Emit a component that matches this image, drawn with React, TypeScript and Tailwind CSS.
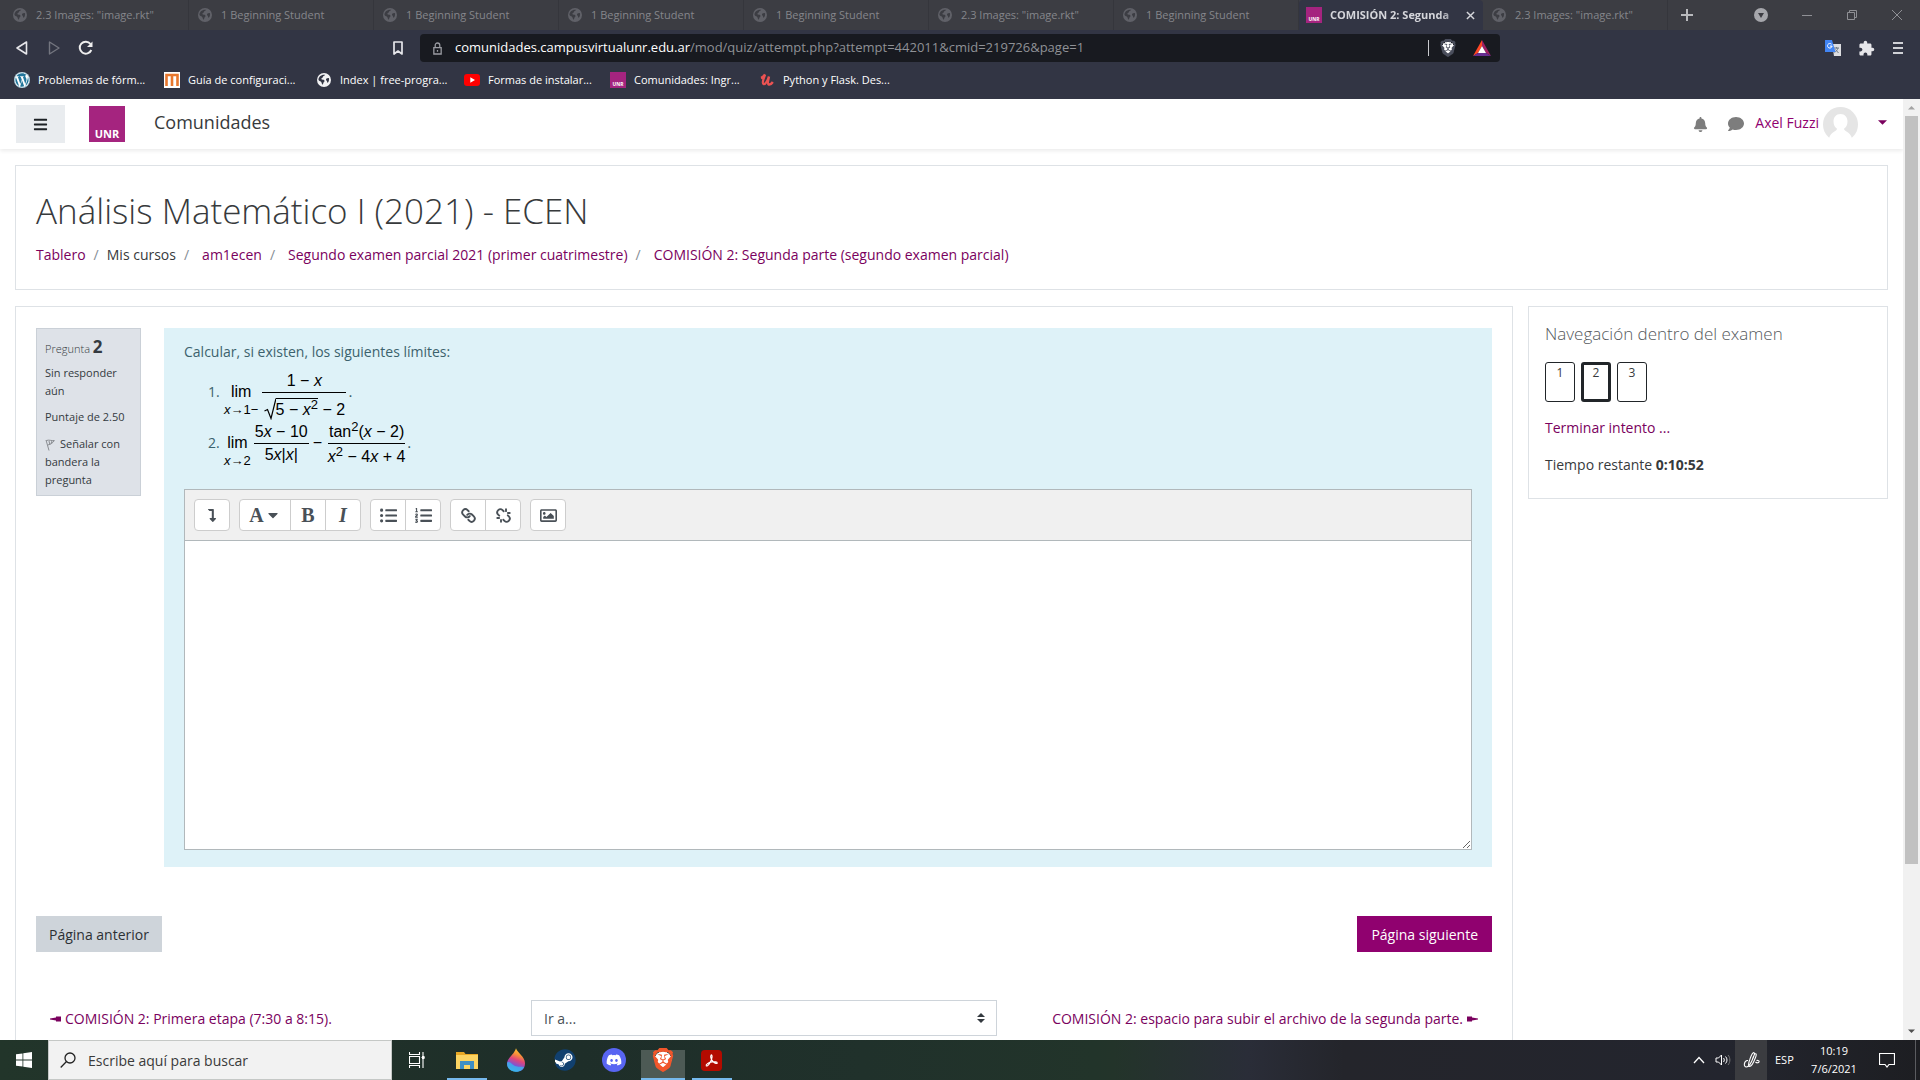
import React from "react";
import {
  FaBars, FaBell, FaCaretDown, FaComment, FaDiscord, FaLevelDownAlt,
  FaListOl, FaListUl, FaRegImage, FaSteam, FaWordpress,
} from "react-icons/fa";
import { MdExtension } from "react-icons/md";
import { SiBrave } from "react-icons/si";
import { Link, Unlink } from "lucide-react";

const Globe = ({ className = "" }: { className?: string }) => (
  <svg viewBox="0 0 16 16" className={`size-4 shrink-0 ${className}`}>
    <path
      fill="currentColor"
      fillRule="evenodd"
      d="M8 1a7 7 0 1 0 0 14A7 7 0 0 0 8 1Zm1.2 1.8c-.5 1-1.400 1-1.900 1.500-.6.500-.3 1.200-.9 1.500-.8.400-1.300.900-.9 1.500.5.600 2 .1 2.700.9.700.800.2 1.400-.3 1.900-.6.600-.5 1.500-1.100 2.600-.9-.3-1-1.700-1.400-2.500C4.900 9.300 3.200 9 2.500 8c-.2-3 2.700-5.800 6.700-5.200Zm1.300 3.700c.900-.6 1.700-.8 2.500-.3.300 1.800-.2 3.400-1.300 4.600-.8-.3-.4-1.300-.9-1.900-.5-.5-1.400-1.500-.3-2.400Z"
    />
  </svg>
);

const UnrMark = ({ className = "size-4" }: { className?: string }) => (
  <svg viewBox="0 0 36 36" className={`shrink-0 ${className}`}>
    <rect width="36" height="36" fill="#a5247f" />
    <text x="18" y="32" textAnchor="middle" fontSize="11" fontWeight="700" fill="#fff" fontFamily="Open Sans, sans-serif">
      UNR
    </text>
  </svg>
);

type Tab = { title: string; active?: boolean };
const images = '2.3 Images: "image.rkt"';
const student = "1 Beginning Student";
const tabs: Tab[] = [
  { title: images }, { title: student }, { title: student }, { title: student }, { title: student },
  { title: images }, { title: student }, { title: "COMISIÓN 2: Segunda", active: true }, { title: images },
];

function TabStrip() {
  return (
    <header className="flex h-[30px] shrink-0 items-stretch bg-[#3c3d43] pl-1 text-[11px]">
      {tabs.map((t, i) =>
        t.active ? (
          <div key={i} className="flex w-[184px] items-center gap-2 rounded-t bg-[#323544] pr-2 pl-[7px] font-bold text-[#d5d6db]">
            <UnrMark />
            <span className="flex-1 whitespace-nowrap [mask-image:linear-gradient(to_right,black_85%,transparent_110%)]">{t.title}</span>
            <button aria-label="Cerrar pestaña">
              <svg viewBox="0 0 10 10" className="size-[9px]"><path d="M1 1l8 8M9 1L1 9" stroke="currentColor" strokeWidth="1.6" /></svg>
            </button>
          </div>
        ) : (
          <button key={i} className="flex w-[185px] items-center gap-2 border-r border-[#35363c] px-2 text-left text-[#85868b]">
            <Globe className="text-[#606168]" />
            <span className="whitespace-nowrap">{t.title}</span>
          </button>
        )
      )}
      <button aria-label="Nueva pestaña" className="ml-3 text-[#b9babd]">
        <svg viewBox="0 0 14 14" className="size-[14px]"><path d="M7 1v12M1 7h12" stroke="currentColor" strokeWidth="2" /></svg>
      </button>
      <div className="ml-auto flex items-center gap-[33px] pr-[17px] text-[#8f9095]">
        <button aria-label="Buscar pestañas">
          <svg viewBox="0 0 14 14" className="size-[14px]"><circle cx="7" cy="7" r="7" fill="#a6a7ac" /><path d="M4 5h6l-3 5z" fill="#3c3d43" /></svg>
        </button>
        <button aria-label="Minimizar"><svg viewBox="0 0 12 12" className="size-3"><path d="M1 6.500h10" stroke="currentColor" /></svg></button>
        <button aria-label="Restaurar"><svg viewBox="0 0 12 12" className="size-3"><path d="M1.500 3.500h7v7h-7zM3.500 3.500v-2h7v7h-2" fill="none" stroke="currentColor" /></svg></button>
        <button aria-label="Cerrar"><svg viewBox="0 0 12 12" className="size-3"><path d="M1 1l10 10M11 1L1 11" stroke="currentColor" /></svg></button>
      </div>
    </header>
  );
}

function Lion({ color, className = "" }: { color: string; className?: string }) {
  return (
    <span className={`grid shrink-0 place-items-center rounded-full bg-[radial-gradient(closest-side,#fff_70%,transparent_72%)] ${className}`}>
      <SiBrave className={`size-full ${color}`} />
    </span>
  );
}

function AddressRow() {
  return (
    <div className="flex h-[36px] shrink-0 items-center bg-[#323544] text-white">
      <div className="flex w-[384px] items-center gap-4 pl-[14px]">
        <button aria-label="Atrás"><svg viewBox="0 0 16 16" className="size-4"><path d="M12.500 2v12L3 8z" fill="none" stroke="#e6e6ea" strokeWidth="1.600" strokeLinejoin="round" /></svg></button>
        <button aria-label="Adelante"><svg viewBox="0 0 16 16" className="size-4"><path d="M3.500 2v12L13 8z" fill="none" stroke="#73757f" strokeWidth="1.400" strokeLinejoin="round" /></svg></button>
        <button aria-label="Recargar"><svg viewBox="0 0 16 16" className="size-4"><path d="M13.300 10A6 6 0 1 1 12.500 4" fill="none" stroke="#eee" strokeWidth="2" /><path d="M14.500 1.500v5.500H9z" fill="#eee" /></svg></button>
      </div>
      <button aria-label="Marcador" className="ml-[6px] mr-[14px]">
        <svg viewBox="0 0 16 16" className="size-4"><path d="M4 2h8v12l-4-3-4 3z" fill="none" stroke="#e6e6ea" strokeWidth="1.700" strokeLinejoin="round" /></svg>
      </button>
      <div className="flex h-7 w-[1080px] items-center rounded bg-[#181a20] pr-[9px] pl-3 text-[13px]">
        <svg viewBox="0 0 12 14" className="mr-3 h-[13px] w-[11px]"><path d="M2 6h8v7H2zM3.500 6V3.500a2.500 2.500 0 0 1 5 0V6M6 8.500v2" fill="none" stroke="#9b9ca2" strokeWidth="1.400" /></svg>
        <span className="whitespace-nowrap text-[#8f9196]">
          <span className="text-white">comunidades.campusvirtualunr.edu.ar</span>/mod/quiz/attempt.php?attempt=442011&amp;cmid=219726&amp;page=1
        </span>
        <span className="ml-auto h-4 w-px bg-[#c9cace]" />
        <Lion color="text-[#4a4e5c]" className="ml-[10px] size-[18px]" />
        <svg viewBox="0 0 18 16" className="ml-4 h-4 w-[18px]">
          <path d="M9 0L0 16l5-3L9 6z" fill="#ff4724" /><path d="M9 0l9 16-5-3L9 6z" fill="#9e1f63" /><path d="M0 16h18l-5-3H5z" fill="#662d91" /><path d="M9 6l4 7H5z" fill="#fff" />
        </svg>
      </div>
      <div className="ml-auto flex items-center gap-[17px] pr-4">
        <svg viewBox="0 0 16 16" className="size-4">
          <path d="M7 4h9v12H9z" fill="#dcdde0" /><path d="M9 8h5M11.500 7v1.500M13 8c-.5 2-2 3.500-3.500 4.500M10.500 9.500l3 3.500" stroke="#6f7a85" fill="none" /><path d="M0 0h7l3.500 12H0z" fill="#4285f4" />
          <path d="M6.500 4.200a2.300 2.300 0 1 0 .6 1.900H5" fill="none" stroke="#fff" />
        </svg>
        <MdExtension className="size-[17px] text-[#e6e6ea]" />
        <button aria-label="Menú"><svg viewBox="0 0 12 14" className="h-[14px] w-3"><path d="M1 2h10M1 7h10M1 12h10" stroke="#d0d1d6" strokeWidth="1.800" /></svg></button>
      </div>
    </div>
  );
}

const bookmarks = [
  { text: "Problemas de fórm...", width: "w-[150px]", icon: <span className="grid size-4 place-items-center rounded-full bg-white"><FaWordpress className="size-4 text-[#21759b]" /></span> },
  { text: "Guía de configuraci...", width: "w-[152px]", icon: <svg viewBox="0 0 16 16" className="size-4"><path fill="#fff" d="M0 0h16v16H0z" /><path d="M2.500 14V3h11v11M8 3v11" fill="none" stroke="#e8772e" strokeWidth="2.600" /></svg> },
  { text: "Index | free-progra...", width: "w-[148px]", icon: <Globe className="text-[#f2f2f4]" /> },
  { text: "Formas de instalar...", width: "w-[146px]", icon: <svg viewBox="0 0 16 16" className="size-4"><rect y="2" width="16" height="12" rx="3" fill="#f00" /><path d="M6.300 5.300v5.400L11 8z" fill="#fff" /></svg> },
  { text: "Comunidades: Ingr...", width: "w-[149px]", icon: <UnrMark /> },
  { text: "Python y Flask. Des...", width: "w-[150px]", icon: <svg viewBox="0 0 16 16" className="size-4"><path d="M2 6c1.500-.5 3-2 4-3.500-1 3-3.500 8.500-1.500 9.500 2 .8 4.500-4 5.500-7.500-.8 3.500-2 7.500-.2 8 1.500.3 3-1 4-2.500" fill="none" stroke="#ea5252" strokeWidth="2.400" /></svg> },
];

function Formula({ children }: { children: React.ReactNode }) {
  return <div className="flex h-[51px] items-start font-['Liberation_Sans',sans-serif] text-[16px] leading-[22px] whitespace-nowrap text-black">{children}</div>;
}
const X = () => <i>x</i>;
const Sup = () => <sup className="text-[13px]">2</sup>;
function Lim({ under }: { under: React.ReactNode }) {
  return (
    <div className="flex flex-col items-center pt-[14px]">
      <span>lim</span>
      <span className="text-[13px] leading-[14px]">{under}</span>
    </div>
  );
}
function Frac({ top, bottom, className = "" }: { top: React.ReactNode; bottom: React.ReactNode; className?: string }) {
  return (
    <div className={`flex flex-col items-center pt-[3px] ${className}`}>
      <div>{top}</div>
      <div className="h-px w-full bg-black" />
      {bottom}
    </div>
  );
}

function Group({ items }: { items: [string, React.ReactNode][] }) {
  return (
    <div className="flex divide-x divide-[#cdcdcd] rounded border border-[#cdcdcd] bg-white">
      {items.map(([label, icon]) => (
        <button key={label} aria-label={label} className="box-content grid h-[30px] min-w-[34px] place-items-center">{icon}</button>
      ))}
    </div>
  );
}

const glyph = "font-['Liberation_Serif',serif] text-[20px] font-bold";

function Question() {
  return (
    <div className="flex gap-[23px]">
      <div className="flex w-[105px] flex-col self-start border border-[#cad0d7] bg-[#dee2e8] px-2 pt-[7px] pb-[6px] text-[11px] leading-[18px] text-[#343a40]">
        <h3 className="leading-[22px] font-light">Pregunta <span className="text-[17px] font-bold">2</span></h3>
        <p className="mt-1">Sin responder aún</p>
        <p className="mt-2">Puntaje de 2.50</p>
        <a href="#bandera" className="mt-[9px]">
          <svg viewBox="0 0 10 12" className="mr-[5px] inline h-3 w-[10px]"><path d="M1 1l3 10.500M1.300 1.500c3-1 5 .5 8 0-1 2-3.500 4-6.500 4.500M4 2l.8 3.500M7 2L6 4.500" fill="none" stroke="#8a8d92" /></svg>
          Señalar con bandera la pregunta
        </a>
      </div>
      <div className="min-w-0 flex-1 bg-[#def2f8] px-5 pt-[13px] pb-[17px] text-[14px] leading-[22px] text-[#3c626d]">
        <p>Calcular, si existen, los siguientes límites:</p>
        <ol className="mt-1 pl-6">
          <li className="flex">
            <span className="w-[16px] pt-[14px]">1.</span>
            <Formula>
              <Lim under={<><X />→1−</>} />
              <Frac
                className="ml-1 w-[84px]"
                top={<>1 − <X /></>}
                bottom={
                  <div className="flex pt-[5px]">
                    <svg viewBox="0 0 12 22" className="h-[22px] w-3"><path d="M0.500 13l3-1.500 3.500 9L12 .5" fill="none" stroke="#000" strokeWidth="1.200" /></svg>
                    <span className="border-t border-black">5 − <X /><Sup /></span>
                    <span className="pt-px">&nbsp;− 2</span>
                  </div>
                }
              />
              <span className="pt-[14px] pl-[2px] text-[#3c626d]">.</span>
            </Formula>
          </li>
          <li className="flex">
            <span className="w-[16px] pt-[14px]">2.</span>
            <Formula>
              <Lim under={<><X />→2</>} />
              <Frac className="ml-[3px] w-[55px]" top={<>5<X /> − 10</>} bottom={<div>5<X />|<X />|</div>} />
              <span className="mx-1 pt-[14px]">−</span>
              <Frac
                className="ml-[2px] w-[77px]"
                top={<>tan<Sup />(<X /> − 2)</>}
                bottom={<div className="pt-[2px]"><X /><Sup /> − 4<X /> + 4</div>}
              />
              <span className="pt-[14px] pl-[2px] text-[#3c626d]">.</span>
            </Formula>
          </li>
        </ol>
        <div className="mt-5 border border-[#b1b8bb] bg-white">
          <div className="flex gap-[9px] border-b border-[#b1b8bb] bg-[#f0f0f0] p-[9px] text-[#495057]">
            <Group items={[["Mostrar más botones", <FaLevelDownAlt className="h-[13px]" />]]} />
            <Group
              items={[
                ["Estilos de párrafo", <span className="flex w-[50px] items-center justify-center gap-px"><span className={glyph}>A</span><FaCaretDown className="size-4" /></span>],
                ["Negrita", <b className={glyph}>B</b>],
                ["Cursiva", <i className={glyph}>I</i>],
              ]}
            />
            <Group items={[["Lista", <FaListUl className="size-[17px]" />], ["Lista numerada", <FaListOl className="size-[17px]" />]]} />
            <Group items={[["Enlace", <Link strokeWidth={3} className="size-[15px] -scale-x-100" />], ["Quitar enlace", <Unlink strokeWidth={3} className="size-[15px] -scale-x-100" />]]} />
            <Group items={[["Imagen", <FaRegImage className="size-[17px]" />]]} />
          </div>
          <textarea aria-label="Respuesta" className="block h-[308px] w-full resize-y bg-white p-2 outline-none" />
        </div>
      </div>
    </div>
  );
}

const crumbs = ["Tablero", "Mis cursos", "am1ecen", "Segundo examen parcial 2021 (primer cuatrimestre)", "COMISIÓN 2: Segunda parte (segundo examen parcial)"];

const Pointer = ({ right = false }: { right?: boolean }) => (
  <svg viewBox="0 0 11 6" className={right ? "h-[6px] w-[11px] -scale-x-100" : "h-[6px] w-[11px]"}><path d="M0 2.500L6 1.500V.5h5v5H6v-1L0 3.500z" fill="#7a015e" /></svg>
);

function Page() {
  return (
    <div className="flex min-h-0 flex-1 bg-white text-[#373a3c]">
      <div className="min-w-0 flex-1 overflow-hidden text-[14px] leading-[22px]">
        <nav className="flex h-[50px] items-center pr-4 pl-4 shadow-[0_2px_4px_rgba(0,0,0,0.08)]">
          <button aria-label="Panel lateral" className="grid h-[38px] w-[49px] place-items-center bg-[#e9ecef] text-[#1d2125]"><FaBars className="size-[15px]" /></button>
          <a href="#inicio" aria-label="UNR" className="ml-6"><UnrMark className="size-9" /></a>
          <a href="#comunidades" className="ml-[29px] pb-1 text-[18px]">Comunidades</a>
          <div className="ml-auto flex items-center text-[#7d7d7d]">
            <FaBell className="size-[15px]" />
            <FaComment className="ml-5 size-4" />
            <a href="#perfil" className="ml-[11px] pb-[2px] text-[#90016f]">Axel Fuzzi</a>
            <svg viewBox="0 0 35 35" className="ml-1 size-[35px]">
              <circle cx="17.500" cy="17.500" r="17.500" fill="#e5e5e5" />
              <path d="M17.500 7c4.500 0 7 3.200 7 7.500 0 3.500-1.500 6-3.500 7.200.2 2.800 6 2.500 8 9.500-6 5-17 5-23 0 2-7 7.800-6.700 8-9.500-2-1.200-3.500-3.700-3.500-7.200 0-4.300 2.500-7.500 7-7.500z" fill="#fff" />
              <path d="M0 31h35v4H0z" fill="#fff" />
            </svg>
            <button aria-label="Menú de usuario" className="ml-5 pb-1 text-[#7a015e]"><svg viewBox="0 0 10 5" className="h-[5px] w-[9px]"><path d="M0 0h10L5 5z" fill="currentColor" /></svg></button>
          </div>
        </nav>
        <div className="px-[15px] pt-4">
          <section className="border border-[#dee2e6] px-5 pt-6 pb-[23px]">
            <h1 className="text-[35px] leading-[42px] font-light">Análisis Matemático I (2021) - ECEN</h1>
            <ol className="mt-3 flex">
              {crumbs.map((c, i) => (
                <li key={c} className="whitespace-nowrap">
                  {i > 0 && <span className="px-2 text-[#868e96]">/</span>}
                  {i === 1 ? c : <a href="#curso" className={`text-[#7a015e] ${i > 1 ? "ml-[5px]" : ""}`}>{c}</a>}
                </li>
              ))}
            </ol>
          </section>
          <div className="mt-4 flex items-start gap-[15px]">
            <main className="min-w-0 flex-1 border border-[#dee2e6] px-5 pt-[21px] pb-10">
              <Question />
              <div className="mt-[49px] flex justify-between">
                <button className="h-9 bg-[#ced4da] px-[13px] pt-px text-[#2c3034]">Página anterior</button>
                <button className="h-9 bg-[#90016f] px-[14px] pt-px text-white">Página siguiente</button>
              </div>
              <div className="mt-12 flex items-center justify-between px-[14px] text-[#7a015e]">
                <a href="#previa" className="flex w-[481px] items-center gap-1 pt-px"><Pointer />COMISIÓN 2: Primera etapa (7:30 a 8:15).</a>
                <div className="relative flex-1">
                  <select aria-label="Ir a..." className="h-9 w-full appearance-none border border-[#ced4da] bg-white px-3 pt-px text-[#495057]"><option>Ir a...</option></select>
                  <svg viewBox="0 0 8 10" className="pointer-events-none absolute top-[13px] right-3 h-[10px] w-2"><path d="M0 4l4-4 4 4zM0 6h8l-4 4z" fill="#343a40" /></svg>
                </div>
                <a href="#siguiente" className="flex w-[481px] items-center justify-end gap-1 pt-px">COMISIÓN 2: espacio para subir el archivo de la segunda parte.<Pointer right /></a>
              </div>
            </main>
            <aside className="w-[360px] shrink-0 border border-[#dee2e6] px-4 pt-[15px] pb-[22px]">
              <h2 className="text-[17px] leading-[24px] font-light text-[#55595c]">Navegación dentro del examen</h2>
              <div className="mt-4 flex gap-[6px] text-[12px] leading-[18px]">
                <a href="#1" className="h-10 w-[30px] rounded-[3px] border border-[#212529] pt-px text-center">1</a>
                <a href="#2" className="h-10 w-[30px] rounded-[3px] border-3 border-[#212529] text-center leading-[16px]">2</a>
                <a href="#3" className="h-10 w-[30px] rounded-[3px] border border-[#212529] pt-px text-center">3</a>
              </div>
              <a href="#terminar" className="mt-[15px] block text-[#7a015e]">Terminar intento ...</a>
              <p className="mt-[15px]">Tiempo restante <b>0:10:52</b></p>
            </aside>
          </div>
        </div>
      </div>
      <div className="flex w-[17px] shrink-0 flex-col items-center bg-[#f1f1f1]">
        <svg viewBox="0 0 17 17" className="size-[17px]"><path d="M5 10.500h7L8.500 7z" fill="#a3a3a3" /></svg>
        <div className="w-[13px] flex-[748_0_0] bg-[#c1c1c1]" />
        <div className="flex-[159_0_0]" />
        <svg viewBox="0 0 17 17" className="size-[17px]"><path d="M5 6.500h7L8.500 10z" fill="#505050" /></svg>
      </div>
    </div>
  );
}

function AppButton({ label, children, open = false, active = false }: { label: string; children: React.ReactNode; open?: boolean; active?: boolean }) {
  return (
    <button aria-label={label} className="flex h-full w-[49px] items-stretch justify-center">
      <span className={`flex items-center justify-center ${open ? "border-b-2 border-[#76b9ed] pt-[2px]" : ""} ${active ? "w-11 bg-[linear-gradient(transparent_10px,#4d5a55_10px)]" : "w-10"}`}>{children}</span>
    </button>
  );
}

function Taskbar() {
  return (
    <footer className="flex h-10 shrink-0 items-stretch bg-[linear-gradient(to_right,#22352a_0,#1e2e29_30%,#20312b_45%,#22342a_57%,#23342a_58%,#2a2d38_65%,#24252b_70%,#23252e_90%,#1d1e22_100%)] text-[11px] text-white">
      <button aria-label="Inicio" className="grid w-12 place-items-center">
        <svg viewBox="0 0 16 16" className="size-4"><path d="M0 2.300L6.500 1.400v6.200H0zM7.300 1.300L16 0v7.600H7.300zM0 8.400h6.500v6.200L0 13.700zM7.300 8.400H16V16l-8.700-1.300z" fill="#fff" /></svg>
      </button>
      <label className="flex w-[344px] items-center gap-3 border border-[#c5c8c6] bg-[#f2f2f2] px-[11px]">
        <svg viewBox="0 0 16 16" className="size-4 shrink-0"><circle cx="10" cy="6" r="5" fill="none" stroke="#222" strokeWidth="1.300" /><path d="M6.500 9.500L.7 15.500" stroke="#222" strokeWidth="1.300" /></svg>
        <input aria-label="Buscar" placeholder="Escribe aquí para buscar" className="min-w-0 flex-1 bg-transparent text-[14px] outline-none placeholder:text-[#3a3a3a]" />
      </label>
      <AppButton label="Vista de tareas">
        <svg viewBox="0 0 16 16" className="size-4"><path d="M.5 0v2.500h10V0M.5 16v-2.500h10V16M.5 4.500h10v7H.5zM14 0v16M12.500 5.500h3" fill="none" stroke="#fff" strokeWidth="1.100" /><path d="M13 4h2.500v3H13z" fill="#fff" /></svg>
      </AppButton>
      <div className="ml-px flex">
        <AppButton label="Explorador" open>
          <svg viewBox="0 0 22 19" className="h-[19px] w-[22px]"><path d="M0 1h8l1.500 2H22v15H0z" fill="#e9a825" /><path d="M0 4h22v14H0z" fill="#fcd462" /><path d="M4 18v-8h14v8h-4v-4H8v4z" fill="#3f8fc4" /></svg>
        </AppButton>
        <AppButton label="Editor de imágenes">
          <svg viewBox="0 0 20 26" className="h-6 w-[18px]">
            <defs><linearGradient id="drop" x1=".7" y1="0" x2=".4" y2="1"><stop offset="0" stopColor="#ffd52e" /><stop offset=".3" stopColor="#f58a3c" /><stop offset=".5" stopColor="#e0457b" /><stop offset=".75" stopColor="#7a55d8" /><stop offset="1" stopColor="#35b3ee" /></linearGradient></defs>
            <path d="M10 0c1.500 5 10 9.500 10 16.500S15 26 10 26 0 23 0 17C0 11 8 7 10 0z" fill="url(#drop)" />
            <path d="M0 16c3-3 6 3 10 4s6 0 9 1c-2 3.500-5.500 5-9 5C5 26 0 23 0 16z" fill="#3cb4ee" opacity=".8" />
          </svg>
        </AppButton>
        <AppButton label="Steam">
          <span className="grid size-[22px] place-items-center rounded-full bg-[radial-gradient(closest-side,#fff_88%,transparent_90%)]"><FaSteam className="size-[22px] text-[#11406f]" /></span>
        </AppButton>
        <AppButton label="Discord"><span className="grid size-6 place-items-center rounded-full bg-[#5865f2]"><FaDiscord className="size-4" /></span></AppButton>
        <AppButton label="Brave" open active><Lion color="text-[#f1562b]" className="size-6" /></AppButton>
        <AppButton label="Acrobat" open>
          <svg viewBox="0 0 22 22" className="size-[21px]"><rect width="22" height="22" rx="4" fill="#b30b00" /><path d="M5.500 16.500c-.8-1.500 3-3.500 6-4 3-.5 5.500 0 5.500 1s-2.500 1-4.500-1.500-2.500-5.500-2-6.500 1.500 0 1 2.500-3 8-5 8.700c-.5.200-.9.100-1-.2z" fill="none" stroke="#fff" strokeWidth="1.200" /></svg>
        </AppButton>
      </div>
      <div className="ml-auto flex items-center">
        <button aria-label="Iconos ocultos" className="mr-[10px]"><svg viewBox="0 0 12 8" className="h-2 w-3"><path d="M1 7l5-5.500L11 7" fill="none" stroke="#fff" strokeWidth="1.300" /></svg></button>
        <svg viewBox="0 0 16 14" className="mr-1 h-[14px] w-4"><path d="M1 5h2.500L6.500 2v10l-3-3H1zM8.500 5c1 1.200 1 2.800 0 4M10.500 3.500c2 2 2 5 0 7" fill="none" stroke="#fff" /><path d="M13 2c2.500 2.800 2.500 7.200 0 10" fill="none" stroke="#777" /></svg>
        <span className="grid h-full w-8 place-items-center bg-[#3b3c40]">
          <svg viewBox="0 0 17 17" className="size-[17px]"><path d="M5 8.500c-4-.5-5 6.500-1.500 6.500C6.500 15 9 9 10.500 5c1-2.500 1.500-4 .5-4.300C9.800.3 8 4 6.800 7.500 5.500 11 5 14.500 6.500 14.500c2 0 4.500-5 6-9 .8-2 1-3.500.3-3.700-1-.3-2.300 2.200-3.300 5.200M13.500 8.500c1.500-.5 3 .3 2.500 1.500s-2.500 1-3.500 0" fill="none" stroke="#fff" strokeWidth="1.100" /></svg>
        </span>
        <span className="ml-2 w-6">ESP</span>
        <div className="mr-[15px] ml-[10px] w-[50px] text-center leading-[18px]"><div>10:19</div><div>7/6/2021</div></div>
        <button aria-label="Notificaciones" className="ml-[5px]"><svg viewBox="0 0 16 16" className="size-4"><path d="M.5 1.500h15v11H10L8 15l-2-2.500H.5z" fill="none" stroke="#fff" strokeWidth="1.200" /></svg></button>
        <span className="ml-5 h-full w-[5px] border-l border-[#5b5c60]" />
      </div>
    </footer>
  );
}

export default function App() {
  return (
    <div className="flex h-screen flex-col overflow-hidden font-['Open_Sans','Noto_Sans',sans-serif]">
      <TabStrip />
      <AddressRow />
      <div className="flex h-[33px] shrink-0 items-center bg-[#323544] pl-[14px] text-[11px] text-white">
        {bookmarks.map((b) => (
          <a key={b.text} href="#marcador" className={`flex items-center gap-2 pb-[5px] whitespace-nowrap ${b.width}`}>{b.icon}{b.text}</a>
        ))}
      </div>
      <Page />
      <Taskbar />
    </div>
  );
}
